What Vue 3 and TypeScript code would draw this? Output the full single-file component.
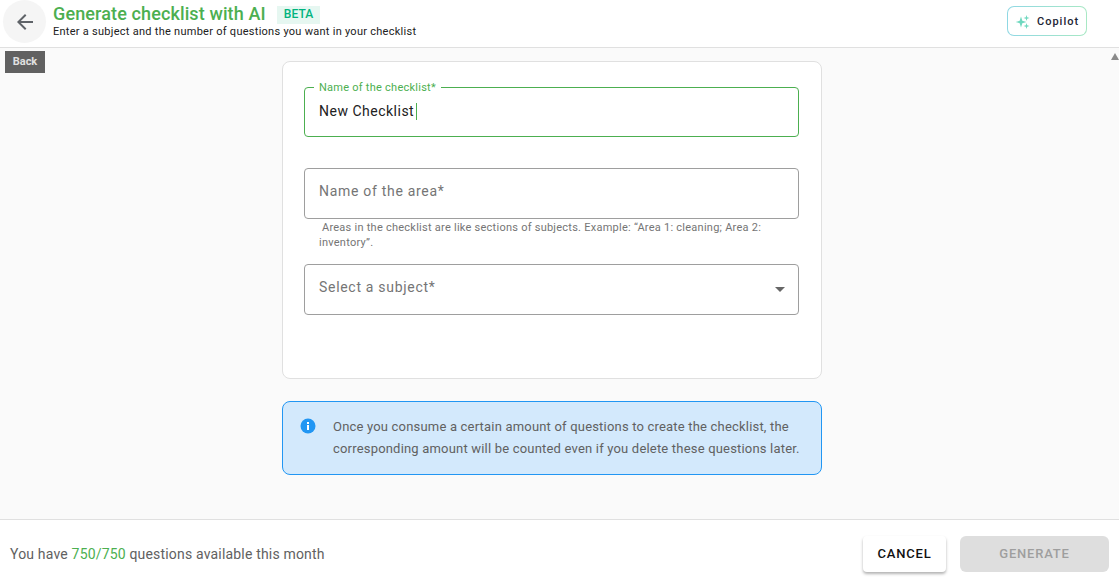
<template>
  <div class="page">
    <header class="top-bar">
      <button class="back-round" type="button" aria-label="Go back">
        <svg width="24" height="24" viewBox="0 0 24 24"><path d="M20 11H7.83l5.59-5.59L12 4l-8 8 8 8 1.41-1.41L7.83 13H20z" fill="#5f6368" /></svg>
      </button>
      <div class="heading">
        <div class="title-row">
          <h1>Generate checklist with AI</h1>
          <span class="beta">BETA</span>
        </div>
        <p>Enter a subject and the number of questions you want in your checklist</p>
      </div>
      <button class="copilot" type="button">
        <svg width="16" height="16" viewBox="0 0 16 16" fill="#6fd8bf">
          <path d="M6 3.5 7.3 7.7 11.5 9 7.3 10.3 6 14.5 4.7 10.3 0.8 9 4.7 7.7z" />
          <path d="M11.5 2 12.2 4.2 14.5 5 12.2 5.8 11.5 8 10.8 5.8 8.5 5 10.8 4.2z" />
          <path d="M11.5 10 12.2 12.2 14.5 13 12.2 13.8 11.5 16 10.8 13.8 8.5 13 10.8 12.2z" />
        </svg>
        <span>Copilot</span>
      </button>
    </header>

    <main class="content">
      <span class="back-tag">Back</span>
      <span class="scroll-arrow"></span>

      <section class="form-card">
        <div class="field focused">
          <fieldset><legend>{{ nameLabel }}</legend></fieldset>
          <span class="value">{{ checklistName }}<i class="caret"></i></span>
        </div>

        <div class="field area">
          <fieldset></fieldset>
          <span class="placeholder">Name of the area*</span>
        </div>
        <p class="helper">&nbsp;Areas in the checklist are like sections of subjects. Example: “Area 1: cleaning; Area 2: inventory”.</p>

        <div class="field subject">
          <fieldset></fieldset>
          <span class="placeholder">Select a subject*</span>
          <span class="arrow"></span>
        </div>
      </section>

      <section class="notice">
        <svg width="16" height="16" viewBox="0 0 16 16">
          <circle cx="8" cy="8" r="7.5" fill="#2196f3" />
          <rect x="7" y="7" width="2" height="5" fill="#fff" />
          <rect x="7" y="4" width="2" height="2" fill="#fff" />
        </svg>
        <p>Once you consume a certain amount of questions to create the checklist, the corresponding amount will be counted even if you delete these questions later.</p>
      </section>
    </main>

    <footer class="bottom-bar">
      <p>You have <b>{{ used }}/{{ total }}</b> questions available this month</p>
      <div class="actions">
        <button class="cancel" type="button">CANCEL</button>
        <button class="generate" type="button" disabled>GENERATE</button>
      </div>
    </footer>
  </div>
</template>

<script setup lang="ts">
import { ref } from 'vue'

const nameLabel = 'Name of the checklist*'
const checklistName = ref<string>('New Checklist')
const used = 750
const total = 750
</script>

<style>
html,
body {
  margin: 0;
  overflow: hidden;
}
</style>

<style scoped>
.page {
  width: 1119px;
  height: 579px;
  display: flex;
  flex-direction: column;
  font-family: Roboto, "Liberation Sans", sans-serif;
  background: #fff;
}

.top-bar {
  box-sizing: border-box;
  height: 48px;
  flex: none;
  display: flex;
  align-items: flex-start;
  padding: 0 32px 0 3px;
  border-bottom: 1px solid #e0e0e0;
}

.back-round {
  width: 43px;
  height: 43px;
  border: none;
  border-radius: 50%;
  background: #f5f5f5;
  padding: 0;
  display: flex;
  align-items: center;
  justify-content: center;
}

.heading {
  margin: 1px 0 0 7px;
  flex: 1;
}

.title-row {
  display: flex;
  align-items: center;
  height: 26px;
}

h1 {
  margin: 0;
  font-size: 18px;
  line-height: 26px;
  font-weight: 500;
  letter-spacing: 0.12px;
  color: #4caf50;
}

.beta {
  margin: 2px 0 0 11px;
  padding: 0 7px;
  height: 18px;
  line-height: 17px;
  font-size: 12px;
  font-weight: 500;
  letter-spacing: 0.1px;
  color: #00b37e;
  background: #e6f7f1;
}

.heading p {
  margin: -1px 0 0;
  font-size: 11px;
  line-height: 11px;
  letter-spacing: 0.27px;
  color: #212121;
}

.copilot {
  width: 80px;
  height: 30px;
  margin-top: 6px;
  padding: 0 0 0 7px;
  display: flex;
  align-items: center;
  gap: 6px;
  border: 1px solid transparent;
  border-radius: 7px;
  background: linear-gradient(#fff, #fff) padding-box, linear-gradient(90deg, #8fd8e4, #a8e8c4) border-box;
  font-family: inherit;
  font-size: 11px;
  font-weight: 500;
  letter-spacing: 1px;
  color: #1d2433;
}

.content {
  position: relative;
  flex: 1;
  display: flex;
  flex-direction: column;
  align-items: center;
  background: #fafafa;
  padding: 13px 15px 0 0;
}

.back-tag {
  position: absolute;
  left: 5px;
  top: 3px;
  width: 40px;
  height: 22px;
  background: #616161;
  color: #e0e0e0;
  font-size: 11px;
  font-weight: 700;
  line-height: 21px;
  text-align: center;
}

.scroll-arrow {
  position: absolute;
  right: 0;
  top: 5px;
  border-left: 4px solid transparent;
  border-right: 4px solid transparent;
  border-bottom: 7px solid #8a8a8a;
}

.form-card {
  box-sizing: border-box;
  width: 540px;
  height: 318px;
  padding: 26px 22px 0 21px;
  background: #fff;
  border: 1px solid #e0e0e0;
  border-radius: 8px;
}

.field {
  position: relative;
  height: 50px;
  display: flex;
  align-items: center;
  padding: 0 15px;
  font-size: 14px;
  letter-spacing: 0.5px;
}

fieldset {
  position: absolute;
  inset: 0;
  margin: 0;
  padding: 0 9px;
  border: 1px solid #9e9e9e;
  border-radius: 4px;
  pointer-events: none;
}

legend {
  padding: 1px 5px 0;
  font-size: 11px;
  line-height: 10px;
  letter-spacing: 0.25px;
  color: #4caf50;
}

.focused fieldset {
  inset: -6px 0 1px;
  border-color: #4caf50;
}

.value {
  margin-top: -3px;
  color: #212121;
}

.caret {
  display: inline-block;
  width: 1px;
  height: 17px;
  margin-left: 2px;
  vertical-align: -4px;
  background: #4caf50;
}

.placeholder {
  margin-top: -6px;
  letter-spacing: 0.7px;
  color: #757575;
}

.area {
  margin-top: 30px;
  height: 51px;
}

.helper {
  margin: 1px 15px 0;
  font-size: 11px;
  line-height: 15px;
  letter-spacing: 0.25px;
  color: #757575;
}

.subject {
  margin-top: 14px;
  height: 51px;
}

.arrow {
  position: absolute;
  right: 14px;
  top: 23px;
  border-left: 5px solid transparent;
  border-right: 5px solid transparent;
  border-top: 5px solid #666;
}

.notice {
  box-sizing: border-box;
  width: 540px;
  height: 74px;
  margin-top: 22px;
  padding: 0 17px;
  display: flex;
  align-items: center;
  gap: 17px;
  background: #d3e9fc;
  border: 1px solid #2196f3;
  border-radius: 8px;
}

.notice svg {
  flex: none;
  margin-top: -24px;
}

.notice p {
  margin: 0;
  font-size: 13px;
  line-height: 22px;
  letter-spacing: 0.19px;
  color: #616161;
}

.bottom-bar {
  box-sizing: border-box;
  height: 60px;
  flex: none;
  display: flex;
  align-items: center;
  justify-content: space-between;
  padding: 8px 10px 0;
  border-top: 1px solid #e0e0e0;
  background: #fff;
}

.bottom-bar p {
  margin: 0;
  font-size: 14px;
  letter-spacing: 0.18px;
  color: #616161;
}

.bottom-bar b {
  font-weight: 400;
  color: #4caf50;
}

.actions {
  display: flex;
  gap: 14px;
}

.actions button {
  height: 36px;
  border: none;
  border-radius: 4px;
  font-family: inherit;
  font-size: 13px;
  font-weight: 500;
  letter-spacing: 0.8px;
  padding: 0;
}

.cancel {
  width: 83px;
  background: #fff;
  color: #111;
  box-shadow: 0 2px 3px rgba(0, 0, 0, 0.3);
}

.generate {
  width: 149px;
  border-radius: 6px !important;
  background: #dedede;
  color: #9e9e9e;
}
</style>
